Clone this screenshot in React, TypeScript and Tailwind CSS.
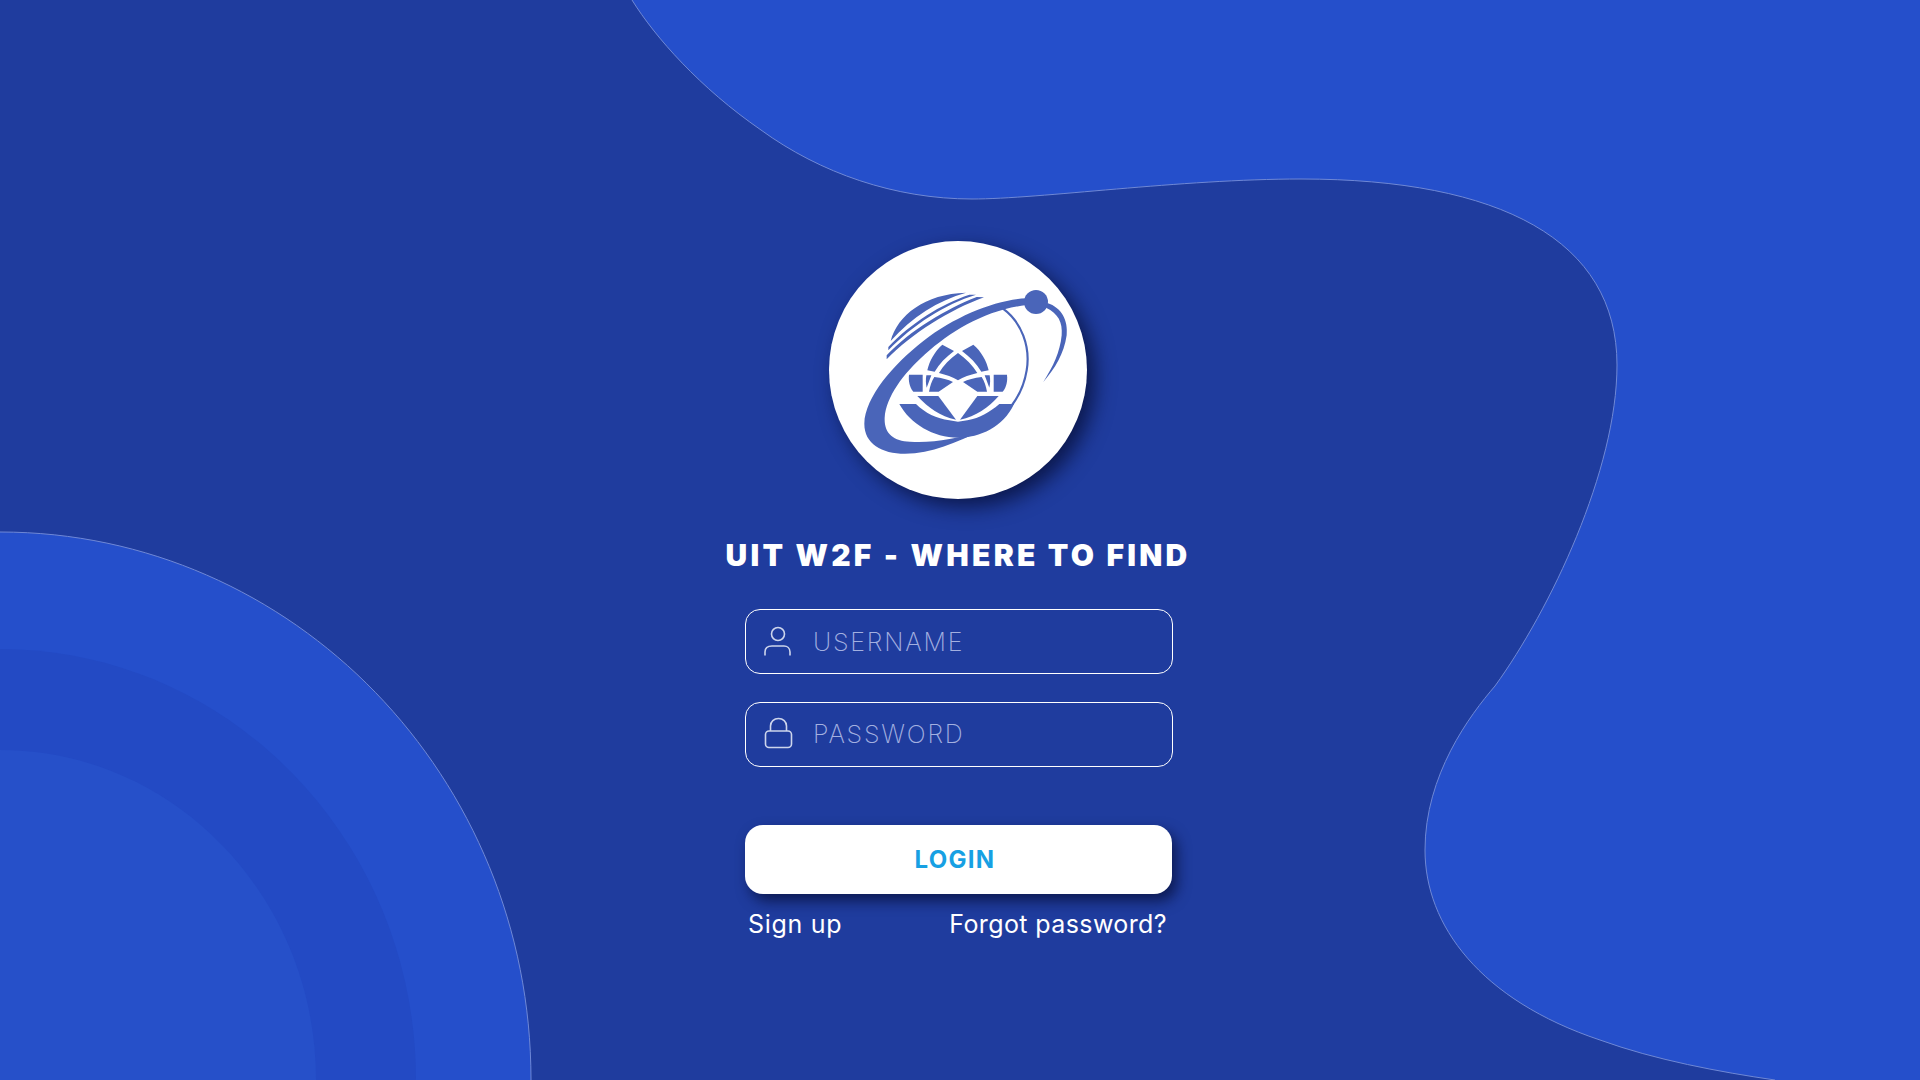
import React from "react";

const blobEdge =
  "M632 0 C 655 37 700 88 761 130 C 820 173 895 199 972 199 C 1040 199 1180 179 1301 179 C 1500 179 1617 240 1617 365 C 1617 470 1550 610 1495 686 C 1470 715 1425 775 1425 850 C 1425 925 1480 1000 1600 1040 C 1655 1060 1720 1072 1775 1080";
const leftEdge = "M0 532 C 293 532 531 777 531 1080";

function Background() {
  return (
    <svg className="absolute inset-0 h-full w-full" viewBox="0 0 1920 1080" aria-hidden="true">
      <path d={`${blobEdge} L1920 1080 L1920 0 Z`} fill="#254fcb" />
      <path d={blobEdge} fill="none" stroke="#6f88d6" strokeWidth="1" />
      <path d={`${leftEdge} L0 1080 Z`} fill="#254fcb" />
      <path d={leftEdge} fill="none" stroke="#6f88d6" strokeWidth="1" />
      <path d="M0 649 C 230 649 416 842 416 1080 L0 1080 Z" fill="#234ac4" />
      <path d="M0 750 C 175 750 316 898 316 1080 L0 1080 Z" fill="#2650c9" />
    </svg>
  );
}

function Logo() {
  const c = "#4a65b9";
  return (
    <svg className="h-full w-full" viewBox="57 62 774 774" aria-hidden="true">
      <path fill={c} d="M242 362 C262 285 345 220 468 217 C385 240 305 290 242 362Z" />
      <path fill={c} d="M235 380 C300 310 395 250 478 223 L498 223 C405 252 310 312 235 390Z" />
      <path fill={c} d="M230 405 C300 330 410 265 500 230 L522 231 C420 268 305 340 230 417Z" />
      <path
        fill={c}
        d="M650 234 C560 238 440 285 340 362 C250 432 165 530 163 610 C163 670 215 700 285 700 C365 700 440 665 512 632 C440 656 370 668 300 664 C250 662 222 640 224 592 C228 530 280 460 345 402 C425 330 530 268 650 254Z"
      />
      <circle cx="678" cy="245" r="36" fill={c} />
      <path fill={c} d="M712 248 C755 262 775 300 770 345 C762 400 735 445 700 485 C730 438 750 395 755 345 C758 305 745 280 708 262Z" />
      <path fill="none" stroke={c} strokeWidth="6.5" d="M578 264 C635 305 662 380 650 450 C637 530 590 590 510 632" />
      <g transform="translate(240 330)" fill={c}>
        <path d="M204 68 C180 85 160 105 147 128 C168 133 188 140 204 150 C220 140 240 133 262 128 C248 105 228 85 204 68Z" />
        <path d="M157 43 L192 62 C168 80 148 100 134 124 L112 120 C118 92 135 62 157 43Z" />
        <path d="M250 43 L216 62 C240 80 260 100 274 124 L296 120 C290 92 273 62 250 43Z" />
        <path d="M57 133 L98 133 L98 184 L70 184 C58 170 55 150 57 133Z" />
        <path d="M351 133 L311 133 L311 184 L338 184 C350 170 353 150 351 133Z" />
        <path d="M109 135 L124 135 L110 172 C107 160 107 147 109 135Z" />
        <path d="M299 135 L284 135 L298 172 C301 160 301 147 299 135Z" />
        <path d="M133 140 C155 143 175 148 189 155 L146 184 L117 184 C120 168 125 152 133 140Z" />
        <path d="M275 140 C253 143 233 148 219 155 L262 184 L291 184 C288 168 283 152 275 140Z" />
        <path d="M82 197 L145 197 L198 268 C150 258 115 232 82 197Z" />
        <path d="M326 197 L262 197 L210 268 C258 258 295 232 326 197Z" />
        <path d="M28 221 L78 221 C105 248 140 265 178 270 L204 274 L232 270 C270 263 300 245 328 221 L372 221 C340 290 270 322 204 322 C130 322 60 280 28 221Z" />
      </g>
    </svg>
  );
}

function UserIcon() {
  return (
    <svg className="h-[32px] w-[32px] shrink-0 overflow-visible" viewBox="0 1 32 32" fill="none" stroke="#cdd5ec" strokeWidth="1.6" aria-hidden="true">
      <circle cx="16" cy="9" r="6.5" />
      <path d="M3 30.5 L3 27 C3 23 6 21 10 21 L22 21 C25 21 28 23 28 27 L28 30.5" />
    </svg>
  );
}

function LockIcon() {
  return (
    <svg className="h-[32px] w-[32px] shrink-0 overflow-visible" viewBox="0 2 32 32" fill="none" stroke="#cdd5ec" strokeWidth="1.6" aria-hidden="true">
      <rect x="3.5" y="14" width="26" height="16.5" rx="3.5" />
      <path d="M8.5 14 L8.5 9 C8.5 4.5 12 1.5 16.5 1.5 C21 1.5 24.5 4.5 24.5 9 L24.5 14" />
    </svg>
  );
}

function Field({ icon, placeholder, spacing }: { icon: React.ReactNode; placeholder: string; spacing: string }) {
  return (
    <div className="flex h-[65px] w-[428px] items-center gap-[19px] rounded-[15px] border border-white pl-[16px] pr-4">
      {icon}
      <input
        readOnly
        placeholder={placeholder}
        className={`w-full bg-transparent pt-[3px] text-[25px] font-extralight text-white outline-none placeholder:text-[#a3b0e0] ${spacing}`}
      />
    </div>
  );
}

export default function App() {
  return (
    <div
      className="relative h-[1080px] w-[1920px] overflow-hidden bg-[#1f3c9e]"
      style={{ fontFamily: '"Inter", "Noto Sans", sans-serif' }}
    >
      <Background />
      <main className="relative flex flex-col items-center pr-[4px] pt-[241px]">
        <div className="h-[258px] w-[258px] rounded-full bg-white shadow-[8px_8px_20px_rgba(5,12,50,0.75)]">
          <Logo />
        </div>
        <h1 className="mt-[37px] text-[30px] font-black leading-[38px] tracking-[3.25px] text-white">
          UIT W2F - WHERE TO FIND
        </h1>
        <div className="ml-[2px] mt-[35px] flex flex-col gap-[28px]">
          <Field icon={<UserIcon />} placeholder="USERNAME" spacing="tracking-[1.8px]" />
          <Field icon={<LockIcon />} placeholder="PASSWORD" spacing="tracking-[1.8px] -translate-y-[1px]" />
        </div>
        <button className="ml-[1px] mt-[58px] flex h-[69px] w-[427px] items-center justify-center rounded-[18px] bg-white pr-[7px] text-[24px] font-bold tracking-[1.3px] text-[#17a0e3] shadow-[5px_7px_14px_rgba(5,12,50,0.7)]">
          LOGIN
        </button>
        <div className="ml-[2px] mt-[15px] flex w-[428px] items-center justify-between pl-[3px] pr-[6px] text-[25px] leading-[30px] text-white">
          <span className="tracking-[0.7px]">Sign up</span>
          <span className="tracking-[0.4px]">Forgot password?</span>
        </div>
      </main>
    </div>
  );
}
